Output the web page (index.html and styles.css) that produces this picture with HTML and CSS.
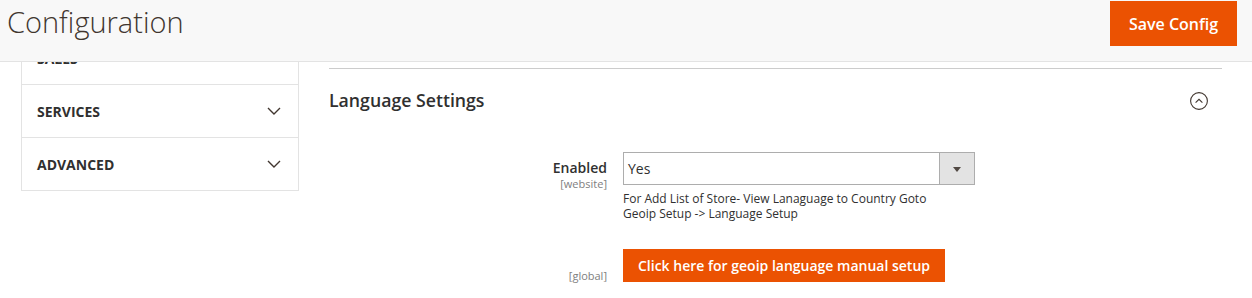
FILE: index.html
```html
<!DOCTYPE html>
<html lang="en">
<head>
  <meta charset="UTF-8">
  <meta name="viewport" content="width=device-width, initial-scale=1.0">
  <title>Configuration</title>
  <link rel="stylesheet" href="styles.css">
</head>
<body>
  <header class="page-header">
    <h1 class="page-title">Configuration</h1>
    <button type="button" class="btn-primary save-btn">Save Config</button>
  </header>

  <div class="page-main">
    <!-- left tabs -->
    <nav class="config-nav">
      <div class="nav-item">
        <span>Sales</span>
        <svg class="chevron" width="14" height="8" viewBox="0 0 14 8"><path d="M1 1l6 6 6-6" fill="none" stroke="#41362f" stroke-width="1.4"/></svg>
      </div>
      <div class="nav-item">
        <span>Services</span>
        <svg class="chevron" width="14" height="8" viewBox="0 0 14 8"><path d="M1 1l6 6 6-6" fill="none" stroke="#41362f" stroke-width="1.4"/></svg>
      </div>
      <div class="nav-item">
        <span>Advanced</span>
        <svg class="chevron" width="14" height="8" viewBox="0 0 14 8"><path d="M1 1l6 6 6-6" fill="none" stroke="#41362f" stroke-width="1.4"/></svg>
      </div>
    </nav>

    <!-- settings -->
    <main class="config-content">
      <section class="config-section">
        <div class="section-title">
          <h2>Language Settings</h2>
          <svg class="collapse-icon" width="18" height="18" viewBox="0 0 18 18">
            <circle cx="9" cy="9" r="8.4" fill="none" stroke="#41362f" stroke-width="1.1"/>
            <path d="M5.6 10.6L9 7.3l3.4 3.3" fill="none" stroke="#41362f" stroke-width="1.1"/>
          </svg>
        </div>

        <div class="fieldset">
          <div class="field">
            <div class="field-label">
              <span class="label-text">Enabled</span>
              <span class="scope scope-under">[website]</span>
            </div>
            <div class="field-control">
              <div class="select">
                <span class="select-value">Yes</span>
                <span class="select-arrow"></span>
              </div>
              <p class="note">For Add List of Store- View Lanaguage to Country Goto Geoip Setup -&gt; Language Setup</p>
            </div>
          </div>

          <div class="field field-button">
            <div class="field-label label-bottom">
              <span class="scope">[global]</span>
            </div>
            <div class="field-control">
              <button type="button" class="btn-primary setup-btn">Click here for geoip language manual setup</button>
            </div>
          </div>
        </div>
      </section>
    </main>
  </div>
</body>
</html>
```

FILE: styles.css
```css
body {
  margin: 0;
  font-family: "Open Sans", Arial, sans-serif;
  color: #303030;
  background: #fff;
}
.page-header {
  position: fixed;
  top: 0;
  left: 0;
  right: 0;
  height: 61px;
  display: flex;
  justify-content: space-between;
  align-items: flex-start;
  background: #f8f8f8;
  border-bottom: 1px solid #e3e3e3;
  z-index: 10;
}
.page-title {
  margin: 8px 0 0 7px;
  font-size: 29px;
  font-weight: 300;
  line-height: 28px;
  color: #41362f;
}
.btn-primary {
  font-family: "Open Sans", Arial, sans-serif;
  font-weight: 600;
  color: #fff;
  background: #eb5202;
  border: none;
  cursor: pointer;
}
.save-btn {
  margin: 1px 15px 0 0;
  width: 127px;
  height: 45px;
  font-size: 16px;
  padding: 0;
}
.page-main {
  display: flex;
  align-items: flex-start;
  padding-top: 31px;
}
.config-nav {
  margin-left: 21px;
  width: 276px;
  border: 1px solid #e3e3e3;
  border-bottom: none;
}
.nav-item {
  height: 52px;
  display: flex;
  align-items: center;
  justify-content: space-between;
  padding: 0 17px 0 15px;
  border-bottom: 1px solid #e3e3e3;
  font-size: 14px;
  font-weight: 700;
  text-transform: uppercase;
  color: #303030;
}
.chevron {
  display: block;
}
.config-content {
  margin-left: 30px;
  width: 893px;
  padding-top: 37px;
}
.config-section {
  border-top: 1px solid #cccccc;
}
.section-title {
  height: 64px;
  display: flex;
  align-items: center;
  justify-content: space-between;
  padding-right: 14px;
}
.section-title h2 {
  margin: 0 0 3px 0;
  font-size: 17.7px;
  font-weight: 600;
  color: #303030;
}
.collapse-icon {
  display: block;
}
.fieldset {
  padding-top: 19px;
}
.field {
  display: grid;
  grid-template-columns: 278px 352px;
  column-gap: 16px;
  margin-bottom: 28px;
}
.field-label {
  display: flex;
  flex-direction: column;
  align-items: flex-end;
  padding-top: 8px;
}
.label-bottom {
  justify-content: flex-end;
  padding-top: 0;
}
.label-text {
  font-size: 14px;
  font-weight: 600;
  line-height: 16px;
}
.scope {
  font-size: 11px;
  line-height: 12px;
  color: #808080;
}
.scope-under {
  margin-top: 2px;
}
.select {
  height: 31px;
  display: flex;
  align-items: center;
  justify-content: space-between;
  border: 1px solid #adadad;
  font-size: 14px;
}
.select-value {
  padding-left: 4px;
}
.select-arrow {
  width: 34px;
  height: 31px;
  position: relative;
  background: #e3e3e3;
  border-left: 1px solid #adadad;
}
.select-arrow::after {
  content: "";
  position: absolute;
  left: 13px;
  top: 14px;
  border-left: 4px solid transparent;
  border-right: 4px solid transparent;
  border-top: 5px solid #514943;
}
.note {
  margin: 6px 0 0 0;
  font-size: 12px;
  line-height: 15px;
  color: #303030;
  width: 320px;
}
.setup-btn {
  width: 322px;
  height: 33px;
  font-size: 14px;
  padding: 0;
}
```
